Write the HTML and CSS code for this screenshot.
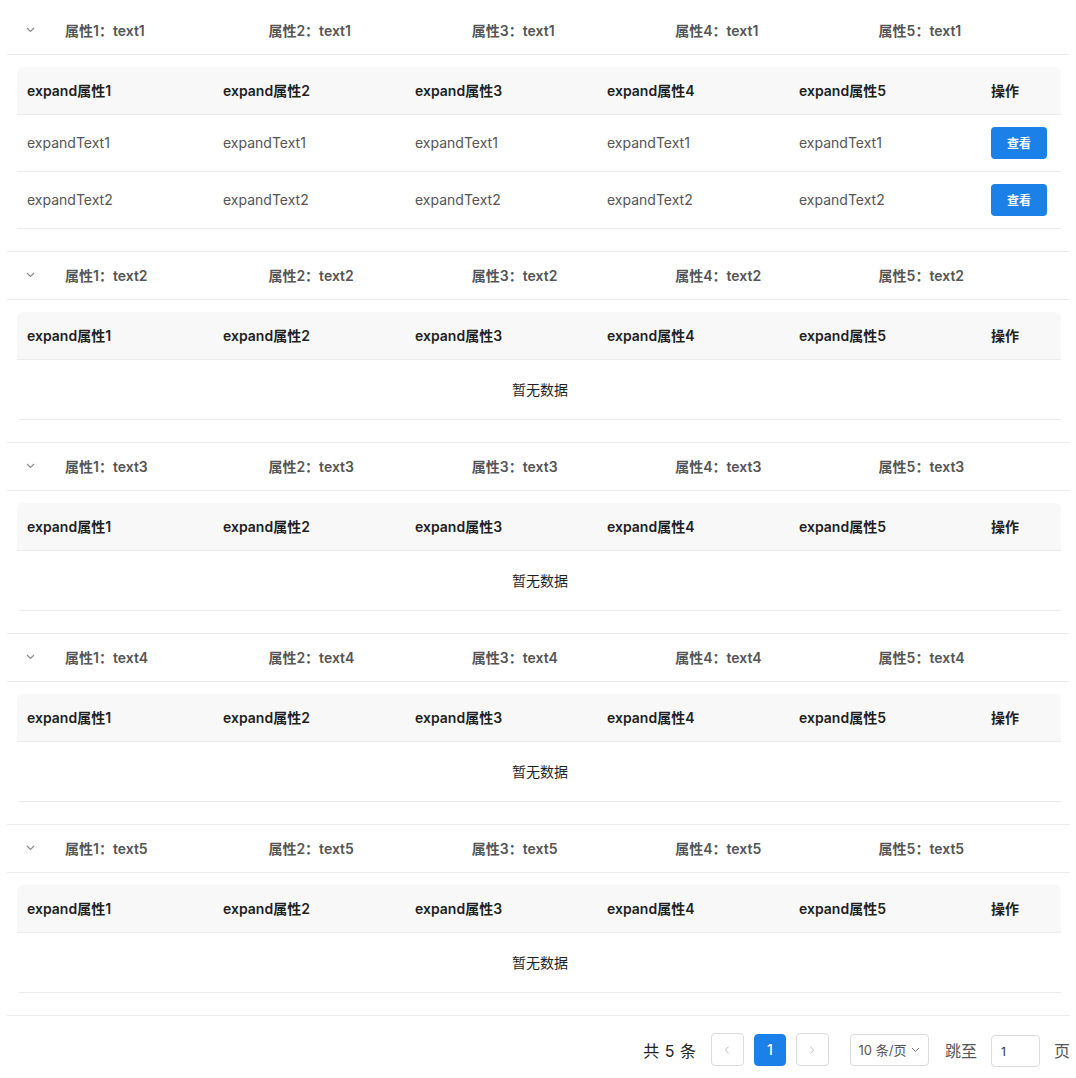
FILE: index.html
```html
<!DOCTYPE html>
<html lang="zh">
<head>
<meta charset="utf-8">
<title>Table</title>
<link rel="stylesheet" href="styles.css">
</head>
<body>
<div class="page">
  <div class="group">
    <div class="group-head">
      <span class="chev"><svg width="9" height="6" viewBox="0 0 9 6"><path d="M1 1 L4.5 4.5 L8 1" fill="none" stroke="#8c8c8c" stroke-width="1.2"/></svg></span>
      <span class="gcell">属性1：text1</span><span class="gcell">属性2：text1</span><span class="gcell">属性3：text1</span><span class="gcell">属性4：text1</span><span class="gcell">属性5：text1</span>
    </div>
    <div class="expand">
      <div class="itable">
        <div class="irow ihead">
          <span>expand属性1</span><span>expand属性2</span><span>expand属性3</span><span>expand属性4</span><span>expand属性5</span><span>操作</span>
        </div>
        <div class="irow ibody">
          <span>expandText1</span><span>expandText1</span><span>expandText1</span><span>expandText1</span><span>expandText1</span><span><button class="btn">查看</button></span>
        </div>
        <div class="irow ibody">
          <span>expandText2</span><span>expandText2</span><span>expandText2</span><span>expandText2</span><span>expandText2</span><span><button class="btn">查看</button></span>
        </div>
      </div>
    </div>
  </div>

  <div class="group">
    <div class="group-head">
      <span class="chev"><svg width="9" height="6" viewBox="0 0 9 6"><path d="M1 1 L4.5 4.5 L8 1" fill="none" stroke="#8c8c8c" stroke-width="1.2"/></svg></span>
      <span class="gcell">属性1：text2</span><span class="gcell">属性2：text2</span><span class="gcell">属性3：text2</span><span class="gcell">属性4：text2</span><span class="gcell">属性5：text2</span>
    </div>
    <div class="expand">
      <div class="itable">
        <div class="irow ihead">
          <span>expand属性1</span><span>expand属性2</span><span>expand属性3</span><span>expand属性4</span><span>expand属性5</span><span>操作</span>
        </div>
        <div class="empty">暂无数据</div>
      </div>
    </div>
  </div>

  <div class="group">
    <div class="group-head">
      <span class="chev"><svg width="9" height="6" viewBox="0 0 9 6"><path d="M1 1 L4.5 4.5 L8 1" fill="none" stroke="#8c8c8c" stroke-width="1.2"/></svg></span>
      <span class="gcell">属性1：text3</span><span class="gcell">属性2：text3</span><span class="gcell">属性3：text3</span><span class="gcell">属性4：text3</span><span class="gcell">属性5：text3</span>
    </div>
    <div class="expand">
      <div class="itable">
        <div class="irow ihead">
          <span>expand属性1</span><span>expand属性2</span><span>expand属性3</span><span>expand属性4</span><span>expand属性5</span><span>操作</span>
        </div>
        <div class="empty">暂无数据</div>
      </div>
    </div>
  </div>

  <div class="group">
    <div class="group-head">
      <span class="chev"><svg width="9" height="6" viewBox="0 0 9 6"><path d="M1 1 L4.5 4.5 L8 1" fill="none" stroke="#8c8c8c" stroke-width="1.2"/></svg></span>
      <span class="gcell">属性1：text4</span><span class="gcell">属性2：text4</span><span class="gcell">属性3：text4</span><span class="gcell">属性4：text4</span><span class="gcell">属性5：text4</span>
    </div>
    <div class="expand">
      <div class="itable">
        <div class="irow ihead">
          <span>expand属性1</span><span>expand属性2</span><span>expand属性3</span><span>expand属性4</span><span>expand属性5</span><span>操作</span>
        </div>
        <div class="empty">暂无数据</div>
      </div>
    </div>
  </div>

  <div class="group">
    <div class="group-head">
      <span class="chev"><svg width="9" height="6" viewBox="0 0 9 6"><path d="M1 1 L4.5 4.5 L8 1" fill="none" stroke="#8c8c8c" stroke-width="1.2"/></svg></span>
      <span class="gcell">属性1：text5</span><span class="gcell">属性2：text5</span><span class="gcell">属性3：text5</span><span class="gcell">属性4：text5</span><span class="gcell">属性5：text5</span>
    </div>
    <div class="expand">
      <div class="itable">
        <div class="irow ihead">
          <span>expand属性1</span><span>expand属性2</span><span>expand属性3</span><span>expand属性4</span><span>expand属性5</span><span>操作</span>
        </div>
        <div class="empty">暂无数据</div>
      </div>
    </div>
  </div>

  <div class="pager">
    <span class="total">共 5 条</span>
    <span class="pbtn"><svg width="8" height="10" viewBox="0 0 8 10"><path d="M5.5 1.5 L2.5 5 L5.5 8.5" fill="none" stroke="#c4c4c4" stroke-width="1"/></svg></span>
    <span class="pbtn active">1</span>
    <span class="pbtn"><svg width="8" height="10" viewBox="0 0 8 10"><path d="M2.5 1.5 L5.5 5 L2.5 8.5" fill="none" stroke="#c4c4c4" stroke-width="1"/></svg></span>
    <span class="psize">10 条/页 <svg width="9" height="6" viewBox="0 0 9 6"><path d="M1 1 L4.5 4.5 L8 1" fill="none" stroke="#777" stroke-width="1"/></svg></span>
    <span class="jump">跳至</span>
    <span class="pinput">1</span>
    <span class="jump last">页</span>
  </div>
</div>
</body>
</html>
```
FILE: styles.css
```css
* { box-sizing: border-box; }
body {
  margin: 0;
  background: #fff;
  font-family: Inter, "Noto Sans CJK SC", sans-serif;
  font-size: 14px;
  color: #555;
}
.page {
  margin: 0 6px 0 7px;
  padding-top: 7px;
}
.group-head {
  display: grid;
  grid-template-columns: 46px repeat(5, 1fr);
  height: 48px;
  padding-bottom: 2px;
  align-items: center;
  border-bottom: 1px solid #ebebf0;
  font-weight: 600;
  color: #555;
}
.chev {
  display: flex;
  justify-content: center;
  align-items: center;
  padding-left: 1px;
  padding-top: 1px;
}
.gcell { padding-left: 12px; }
.expand {
  padding: 12px 9px 22px 10px;
  border-bottom: 1px solid #ebebf0;
}
.itable { width: 100%; }
.irow {
  display: grid;
  grid-template-columns: 196px 192px 192px 192px 192px 1fr;
  align-items: center;
  border-bottom: 1px solid #ebebf0;
}
.irow > span { padding-left: 10px; }
.ihead {
  height: 48px;
  padding-bottom: 2px;
  background: #f8f8f9;
  border-radius: 6px 6px 0 0;
  font-weight: 600;
  color: #1f1f1f;
}
.ibody {
  height: 57px;
  color: #555;
}
.ibody > span:not(:last-child) { padding-bottom: 2px; }
.btn {
  display: flex;
  align-items: center;
  justify-content: center;
  width: 56px;
  height: 32px;
  border: none;
  border-radius: 4px;
  background: #1b80e8;
  color: #fff;
  font-family: Inter, "Noto Sans CJK SC", sans-serif;
  font-size: 12px;
  font-weight: 600;
  padding: 0 0 1px 0;
}
.empty {
  height: 60px;
  display: flex;
  align-items: center;
  justify-content: center;
  padding-bottom: 2px;
  border-bottom: 1px solid #ebebf0;
  margin-left: 2px;
  color: #1f1f1f;
}
.pager {
  display: flex;
  justify-content: flex-end;
  align-items: center;
  padding-top: 16px;
}
.total {
  font-size: 16px;
  color: #222;
  margin-right: 15px;
  word-spacing: 1px;
}
.pbtn {
  width: 33px;
  height: 33px;
  border: 1px solid #dcdcdc;
  border-radius: 4px;
  display: flex;
  align-items: center;
  justify-content: center;
  margin-right: 10px;
  color: #fff;
  font-size: 14px;
}
.pbtn.active {
  background: #1b80e8;
  border-color: #1b80e8;
  width: 32px;
  height: 32px;
  font-weight: 500;
}
.psize {
  height: 32px;
  width: 79px;
  margin-left: 11px;
  border: 1px solid #dcdcdc;
  border-radius: 4px;
  display: flex;
  align-items: center;
  justify-content: center;
  gap: 5px;
  font-size: 13px;
  color: #555;
}
.jump {
  font-size: 16px;
  color: #555;
  margin-left: 16px;
}
.pinput {
  width: 49px;
  height: 32px;
  margin-left: 14px;
  margin-top: 3px;
  border: 1px solid #dcdcdc;
  border-radius: 4px;
  font-size: 12px;
  color: #333;
  display: flex;
  align-items: center;
  padding-left: 9px;
}
.jump.last { margin-left: 14px; margin-right: 0; }
```
